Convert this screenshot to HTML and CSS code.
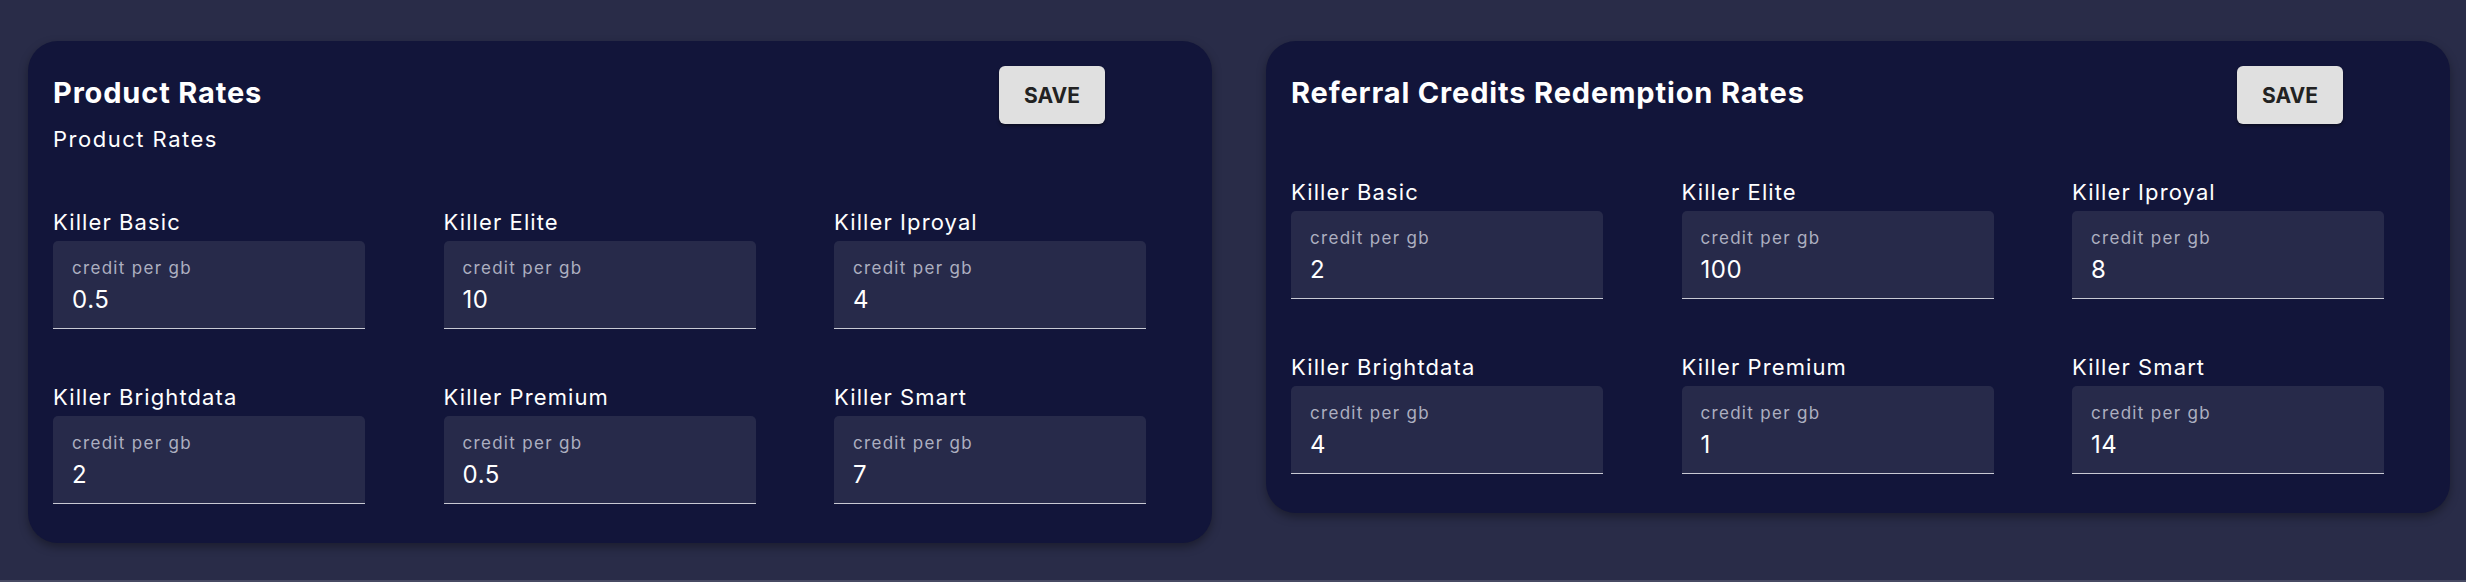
FILE: index.html
```html
<!DOCTYPE html>
<html lang="en">
<head>
<meta charset="utf-8">
<title>Rates</title>
<link rel="stylesheet" href="styles.css">
</head>
<body>
<main class="page">
  <section class="card">
    <header class="card-head">
      <div class="head-text">
        <h2 class="title">Product Rates</h2>
        <p class="subtitle">Product Rates</p>
      </div>
      <button class="save">SAVE</button>
    </header>
    <div class="grid">
      <div class="field"><div class="label">Killer Basic</div><div class="input"><span class="hint">credit per gb</span><span class="value">0.5</span></div></div>
      <div class="field"><div class="label">Killer Elite</div><div class="input"><span class="hint">credit per gb</span><span class="value">10</span></div></div>
      <div class="field"><div class="label">Killer Iproyal</div><div class="input"><span class="hint">credit per gb</span><span class="value">4</span></div></div>
      <div class="field"><div class="label">Killer Brightdata</div><div class="input"><span class="hint">credit per gb</span><span class="value">2</span></div></div>
      <div class="field"><div class="label">Killer Premium</div><div class="input"><span class="hint">credit per gb</span><span class="value">0.5</span></div></div>
      <div class="field"><div class="label">Killer Smart</div><div class="input"><span class="hint">credit per gb</span><span class="value">7</span></div></div>
    </div>
  </section>
  <section class="card">
    <header class="card-head">
      <div class="head-text">
        <h2 class="title">Referral Credits Redemption Rates</h2>
      </div>
      <button class="save">SAVE</button>
    </header>
    <div class="grid">
      <div class="field"><div class="label">Killer Basic</div><div class="input"><span class="hint">credit per gb</span><span class="value">2</span></div></div>
      <div class="field"><div class="label">Killer Elite</div><div class="input"><span class="hint">credit per gb</span><span class="value">100</span></div></div>
      <div class="field"><div class="label">Killer Iproyal</div><div class="input"><span class="hint">credit per gb</span><span class="value">8</span></div></div>
      <div class="field"><div class="label">Killer Brightdata</div><div class="input"><span class="hint">credit per gb</span><span class="value">4</span></div></div>
      <div class="field"><div class="label">Killer Premium</div><div class="input"><span class="hint">credit per gb</span><span class="value">1</span></div></div>
      <div class="field"><div class="label">Killer Smart</div><div class="input"><span class="hint">credit per gb</span><span class="value">14</span></div></div>
    </div>
  </section>
</main>
</body>
</html>
```

FILE: styles.css
```css
html, body {
  height: 100%;
}
body {
  margin: 0;
  box-sizing: border-box;
  background: #292c48;
  border-bottom: 2px solid #474a63;
  overflow: hidden;
  font-family: Inter, "Liberation Sans", sans-serif;
  color: #ffffff;
}
.page {
  display: flex;
  align-items: flex-start;
  gap: 54px;
  padding: 41px 16px 0 28px;
}
.card {
  flex: 0 0 1184px;
  box-sizing: border-box;
  background: #12153a;
  border-radius: 30px;
  padding: 25px 25px 39px 25px;
  box-shadow: 0 4px 10px rgba(0, 0, 0, 0.35);
}
.card-head {
  display: flex;
  justify-content: space-between;
  align-items: flex-start;
}
.head-text {
  display: flex;
  flex-direction: column;
}
.title {
  margin: 0;
  padding-top: 8px;
  font-size: 29px;
  line-height: 38px;
  font-weight: 700;
  letter-spacing: 0.85px;
}
.subtitle {
  margin: 12px 0 0;
  font-size: 22px;
  line-height: 30px;
  font-weight: 400;
  letter-spacing: 1.5px;
}
.save {
  margin-right: 82px;
  width: 106px;
  height: 58px;
  border: none;
  border-radius: 6px;
  background: #e0e0e0;
  color: #222222;
  font-family: Inter, "Liberation Sans", sans-serif;
  font-size: 21px;
  font-weight: 700;
  box-shadow: 0 2px 3px rgba(0, 0, 0, 0.4);
}
.grid {
  display: grid;
  grid-template-columns: repeat(3, 312px);
  column-gap: 78.5px;
  row-gap: 53px;
  margin-top: 53px;
}
.field {
  display: flex;
  flex-direction: column;
}
.label {
  font-size: 22px;
  line-height: 30px;
  letter-spacing: 1.1px;
  margin-bottom: 4px;
}
.input {
  box-sizing: border-box;
  height: 88px;
  display: flex;
  flex-direction: column;
  padding: 17px 19px 0;
  background: #272a4a;
  border-radius: 5px 5px 0 0;
  border-bottom: 1px solid #c8c9d3;
}
.hint {
  font-size: 17px;
  line-height: 20px;
  color: #adafc0;
  letter-spacing: 1.3px;
}
.value {
  margin-top: 7.5px;
  font-size: 24px;
  line-height: 28px;
  letter-spacing: 0.6px;
}
```
